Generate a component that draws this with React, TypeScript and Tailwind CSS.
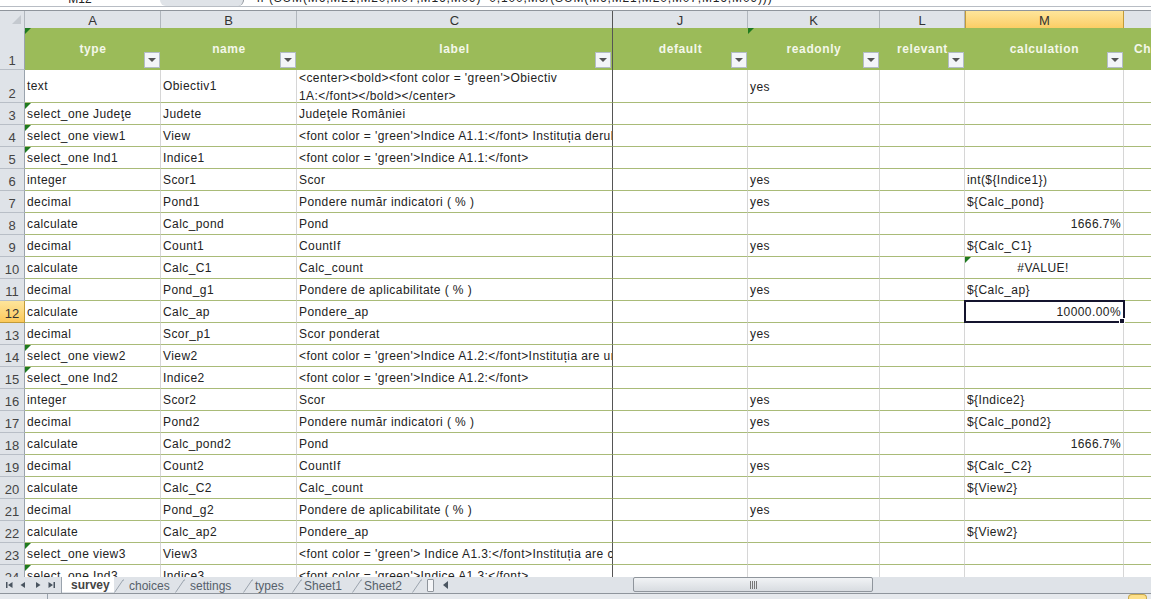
import React from "react";

const cols = "grid grid-cols-[25px_136px_136px_316px_135px_132px_85px_159px_1fr]";
const font = "font-['Liberation_Sans',Arial,sans-serif]";

type R = { n: number; a: string; b: string; c: string; k?: string; m?: string; align?: "r" | "c"; tri?: boolean };
const L = "<font color = 'green'>";
const rows: R[] = [
  { n: 3, a: "select_one Judeţe", b: "Judete", c: "Judeţele României", tri: true },
  { n: 4, a: "select_one view1", b: "View", c: L + "Indice A1.1:</font> Instituția derulează", tri: true },
  { n: 5, a: "select_one Ind1", b: "Indice1", c: L + "Indice A1.1:</font>", tri: true },
  { n: 6, a: "integer", b: "Scor1", c: "Scor", k: "yes", m: "int(${Indice1})" },
  { n: 7, a: "decimal", b: "Pond1", c: "Pondere număr indicatori ( % )", k: "yes", m: "${Calc_pond}" },
  { n: 8, a: "calculate", b: "Calc_pond", c: "Pond", m: "1666.7%", align: "r" },
  { n: 9, a: "decimal", b: "Count1", c: "CountIf", k: "yes", m: "${Calc_C1}" },
  { n: 10, a: "calculate", b: "Calc_C1", c: "Calc_count", m: "#VALUE!", align: "c" },
  { n: 11, a: "decimal", b: "Pond_g1", c: "Pondere de aplicabilitate ( % )", k: "yes", m: "${Calc_ap}" },
  { n: 12, a: "calculate", b: "Calc_ap", c: "Pondere_ap", m: "10000.00%", align: "r" },
  { n: 13, a: "decimal", b: "Scor_p1", c: "Scor ponderat", k: "yes" },
  { n: 14, a: "select_one view2", b: "View2", c: L + "Indice A1.2:</font>Instituția are un", tri: true },
  { n: 15, a: "select_one Ind2", b: "Indice2", c: L + "Indice A1.2:</font>", tri: true },
  { n: 16, a: "integer", b: "Scor2", c: "Scor", k: "yes", m: "${Indice2}" },
  { n: 17, a: "decimal", b: "Pond2", c: "Pondere număr indicatori ( % )", k: "yes", m: "${Calc_pond2}" },
  { n: 18, a: "calculate", b: "Calc_pond2", c: "Pond", m: "1666.7%", align: "r" },
  { n: 19, a: "decimal", b: "Count2", c: "CountIf", k: "yes", m: "${Calc_C2}" },
  { n: 20, a: "calculate", b: "Calc_C2", c: "Calc_count", m: "${View2}" },
  { n: 21, a: "decimal", b: "Pond_g2", c: "Pondere de aplicabilitate ( % )", k: "yes" },
  { n: 22, a: "calculate", b: "Calc_ap2", c: "Pondere_ap", m: "${View2}" },
  { n: 23, a: "select_one view3", b: "View3", c: L + " Indice A1.3:</font>Instituția are cel", tri: true },
  { n: 24, a: "select_one Ind3", b: "Indice3", c: L + "Indice A1.3:</font>", tri: true },
];

const Tri = () => (
  <span className="absolute left-0 top-0 h-0 w-0 border-t-[6px] border-r-[6px] border-t-[#1f7a1f] border-r-transparent" />
);

const cell = "relative flex items-center overflow-hidden whitespace-nowrap pl-[2px] border-r border-r-[#d6d6d6] border-b border-b-[#a9bb78] text-[12px] tracking-[0.42px] text-[#222]";

function RowHead({ n, active }: { n: number; active?: boolean }) {
  return (
    <div
      className={
        "flex items-end justify-center border-r border-b text-[13px] leading-[16px] " +
        (active
          ? "bg-gradient-to-b from-[#fee59a] to-[#fbc95a] border-r-[#c29b38] border-b-[#c29b38] text-[#333]"
          : "bg-[#dfe3e8] border-r-[#9aa3ad] border-b-[#b8bec6] text-[#444]")
      }
    >
      {n}
    </div>
  );
}

function ColHead({ t, active, last }: { t: string; active?: boolean; last?: boolean }) {
  return (
    <div
      className={
        "flex items-center justify-center border-r text-[13px] text-[#333] " +
        (active
          ? "bg-gradient-to-b from-[#fee59a] to-[#fbc95a] border-x border-x-[#c29b38]"
          : last
          ? "bg-[#dfe3e8] border-r-[#555]"
          : "bg-[#dfe3e8] border-r-[#b0b6bd]")
      }
    >
      {t}
    </div>
  );
}

function Filter() {
  return (
    <span className="absolute right-[1px] bottom-[2px] flex h-[16px] w-[16px] items-center justify-center border border-[#b3bcc6] bg-[#f3f5f8]">
      <span className="h-0 w-0 border-x-[4px] border-t-[4px] border-x-transparent border-t-[#555]" />
    </span>
  );
}

function HeadCell({ t, filter = true, tri, frozen, clip }: { t: string; filter?: boolean; tri?: boolean; frozen?: boolean; clip?: boolean }) {
  return (
    <div
      className={
        "relative flex items-center overflow-hidden whitespace-nowrap bg-[#9bbb59] text-[12px] font-bold tracking-[0.6px] text-[#f4f7ea] " +
        (clip ? "justify-start pl-[10px] " : "justify-center ") +
        (frozen ? "border-r border-r-[#555]" : "")
      }
    >
      {tri && <Tri />}
      {t}
      {filter && <Filter />}
    </div>
  );
}

function NavBtn({ d }: { d: string }) {
  return (
    <svg width="12" height="12" viewBox="0 0 12 12" className="shrink-0">
      <path d={d} fill="#4a5560" />
    </svg>
  );
}

const Slash = () => (
  <svg width="10" height="16" viewBox="0 0 10 16" className="shrink-0">
    <path d="M0.500 15.500 L9 3 H10" fill="none" stroke="#9aa3ad" strokeWidth="1" />
  </svg>
);

function Tab({ t, w }: { t: string; w: string }) {
  return <span className={"flex h-full items-center pt-[1px] text-[12px] text-[#56606a] " + w}>{t}</span>;
}

export default function App() {
  return (
    <div className={"flex h-[599px] w-[1151px] flex-col overflow-hidden bg-white " + font}>
      {/* formula bar remnant */}
      <div className="relative flex h-[11px] shrink-0 overflow-hidden border-b border-b-[#8f959c] bg-white">
        <div className="absolute inset-x-0 top-[6px] h-px bg-[#b8bdc4]" />
        <div className="relative z-10 flex h-[6px] w-[160px] items-end justify-center overflow-hidden">
          <span className="text-[12px] leading-[14px] text-[#222]">M12</span>
        </div>
        <div className="relative z-10 h-[6px] w-[84px] rounded-b-[10px] border-r border-r-[#8f959c] bg-[#dfe3e8]" />
        <div className="relative z-10 ml-[13px] flex h-[5px] items-end overflow-hidden pr-[4px]">
          <span className="whitespace-nowrap text-[12px] leading-[14px] tracking-[0.85px] text-[#222]">
            if (SUM(M6,M21,M20,M07,M16,M09)=0,100,M6/(SUM(M6,M21,M20,M07,M16,M09)))
          </span>
        </div>
      </div>

      {/* sheet */}
      <div className="min-h-0 flex-1 overflow-hidden">
        <div className={cols + " h-[17px] border-b border-b-[#b0b6bd]"}>
          <div className="relative border-r border-r-[#b0b6bd] bg-[#dfe3e8]">
            <svg width="9" height="9" viewBox="0 0 9 9" className="absolute left-[12px] top-[4px]">
              <path d="M9 0V9H0z" fill="#c4c9cf" />
            </svg>
          </div>
          <ColHead t="A" />
          <ColHead t="B" />
          <ColHead t="C" last />
          <ColHead t="J" />
          <ColHead t="K" />
          <ColHead t="L" />
          <ColHead t="M" active />
          <div className="bg-[#dfe3e8]" />
        </div>

        <div className={cols + " h-[42px]"}>
          <RowHead n={1} />
          <HeadCell t="type" tri />
          <HeadCell t="name" />
          <HeadCell t="label" frozen />
          <HeadCell t="default" />
          <HeadCell t="readonly" tri />
          <HeadCell t="relevant" />
          <HeadCell t="calculation" />
          <HeadCell t="Choice_filter" filter={false} clip />
        </div>

        <div className={cols + " h-[33px]"}>
          <RowHead n={2} />
          <div className={cell}>text</div>
          <div className={cell}>Obiectiv1</div>
          <div className={cell + " !border-r-[#555] pt-[1px] leading-[18px]"}>
            <span>
              {"<center><bold><font color = 'green'>Obiectiv"}
              <br />
              {"1A:</font></bold></center>"}
            </span>
          </div>
          <div className={cell} />
          <div className={cell + " pt-[1px]"}>yes</div>
          <div className={cell} />
          <div className={cell} />
          <div className={cell + " !border-r-0"} />
        </div>

        {rows.map((r) => (
          <div key={r.n} className={cols + " h-[22px]"}>
            <RowHead n={r.n} active={r.n === 12} />
            <div className={cell}>
              {r.tri && <Tri />}
              {r.a}
            </div>
            <div className={cell}>{r.b}</div>
            <div className={cell + " !border-r-[#555]"}>{r.c}</div>
            <div className={cell} />
            <div className={cell}>{r.k}</div>
            <div className={cell} />
            <div
              className={
                cell +
                (r.align === "r" ? " justify-end pr-[2px]" : r.align === "c" ? " justify-center pr-[4px]" : "") +
                (r.n === 12 ? " !overflow-visible" : "")
              }
            >
              {r.n === 10 && <Tri />}
              {r.m}
              {r.n === 12 && (
                <>
                  <span className="absolute -left-px -top-px z-10 h-[23px] w-[161px] border-2 border-[#14142e]" />
                  <span className="absolute -right-[2px] -bottom-[2px] z-20 h-[6px] w-[6px] border border-white bg-[#14142e]" />
                </>
              )}
            </div>
            <div className={cell + " !border-r-0"} />
          </div>
        ))}
      </div>

      {/* tabs */}
      <div className="flex h-[16px] shrink-0 items-stretch bg-[#dfe3e8] text-[12px]">
        <div className="flex w-[62px] shrink-0 items-center justify-between border-r border-r-[#9aa3ad] px-[3px]">
          <NavBtn d="M3 3h1.500v6H3zM9.500 3v6L5 6z" />
          <NavBtn d="M8 3v6L3.500 6z" />
          <NavBtn d="M4 3v6l4.500-3z" />
          <NavBtn d="M2.500 3v6L7 6zM7.500 3H9v6H7.500z" />
        </div>
        <div className="flex h-[15px] w-[52px] shrink-0 items-center bg-white pl-[9px] pt-[1px] text-[12px] font-bold text-[#444]">
          survey
        </div>
        <Slash />
        <Tab t="choices" w="w-[51px] pl-[5px]" />
        <Slash />
        <Tab t="settings" w="w-[58px] pl-[5px]" />
        <Slash />
        <Tab t="types" w="w-[39px] pl-[2px]" />
        <Slash />
        <Tab t="Sheet1" w="w-[50px] pl-[2px]" />
        <Slash />
        <Tab t="Sheet2" w="w-[50px] pl-[2px]" />
        <Slash />
        <div className="ml-[5px] flex w-[206px] shrink-0 items-center gap-[6px]">
          <span className="h-[13px] w-[7px] rounded-[1px] border border-[#8f959c] bg-[#f5f6f8]" />
          <NavBtn d="M8 2v8L3 6z" />
        </div>
        <div className="flex h-[15px] w-[240px] shrink-0 items-center justify-center gap-[1px] rounded-[2px] border border-[#8f959c] bg-gradient-to-b from-[#f1f3f5] to-[#d8dce1]">
          <span className="h-[8px] w-px bg-[#777]" />
          <span className="h-[8px] w-px bg-[#777]" />
          <span className="h-[8px] w-px bg-[#777]" />
          <span className="h-[8px] w-px bg-[#777]" />
        </div>
      </div>

      {/* status bar */}
      <div className="flex h-[6px] shrink-0 justify-between border-t border-t-[#8f959c] bg-[#e6e9ed]">
        <div className="w-[48px] border-r border-r-[#9aa3ad]" />
        <div className="mr-[4px] h-[6px] w-[19px] rounded-t-[4px] border border-b-0 border-[#c9a94e] bg-[#fde08a]" />
      </div>
    </div>
  );
}
